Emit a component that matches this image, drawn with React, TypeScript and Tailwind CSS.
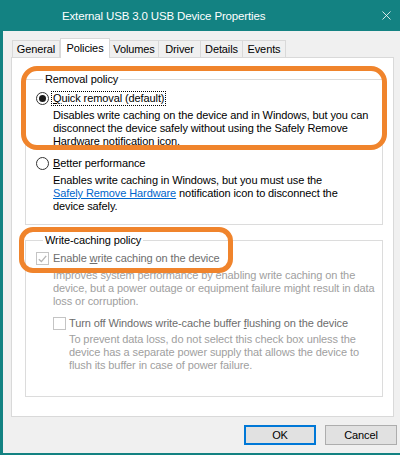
import { X } from 'lucide-react';

const tabs = [
  { label: 'General', w: 'w-[48px]' },
  { label: 'Policies', w: 'w-[50px]', active: true },
  { label: 'Volumes', w: 'w-[50px]' },
  { label: 'Driver', w: 'w-[43px]' },
  { label: 'Details', w: 'w-[43px]' },
  { label: 'Events', w: 'w-[44px]' },
];

function Radio({ checked }: { checked?: boolean }) {
  return (
    <span className="flex h-[13px] w-[13px] shrink-0 items-center justify-center rounded-full border border-[#333] bg-white">
      {checked && <span className="h-[7px] w-[7px] rounded-full bg-[#1a1a1a]" />}
    </span>
  );
}

function Check({ checked }: { checked?: boolean }) {
  return (
    <span className="flex h-[13px] w-[13px] shrink-0 items-center justify-center border border-[#c4c4c4] bg-white">
      {checked && (
        <svg width="9" height="8" viewBox="0 0 9 8">
          <path d="M0.8 4.2 L3.4 6.6 L8.2 0.9" fill="none" stroke="#b5b5b5" strokeWidth="1.4" />
        </svg>
      )}
    </span>
  );
}

export default function App() {
  return (
    <div className="relative h-[455px] w-[400px] overflow-hidden border-b-2 border-l-[3px] border-[#138282] bg-[#f0f0f0] font-['Liberation_Sans',Arial,sans-serif] text-[11px] leading-[13px] tracking-[-0.1px] text-black">
      {/* title bar */}
      <div className="flex h-[31px] items-center justify-between bg-[#138282] pl-[59px] pr-[6px] text-white">
        <span className="text-[11.5px] leading-[16px] tracking-[-0.15px]">External USB 3.0 USB Device Properties</span>
        <X className="h-[15px] w-[15px]" strokeWidth={1.3} />
      </div>

      {/* tabs */}
      <div className="mt-[7px] flex items-end pl-[9px]">
        {tabs.map((t) =>
          t.active ? (
            <div
              key={t.label}
              className={`${t.w} relative z-10 -mb-px flex h-[20px] items-center justify-center border border-b-0 border-[#d9d9d9] bg-white`}
            >
              {t.label}
            </div>
          ) : (
            <div
              key={t.label}
              className={`${t.w} -ml-px flex h-[17px] items-center justify-center border border-b-0 border-[#d9d9d9] bg-[#f0f0f0] first:ml-0`}
            >
              {t.label}
            </div>
          ),
        )}
      </div>

      {/* panel */}
      <div className="ml-[8px] h-[360px] w-[383px] border border-[#d9d9d9] bg-white pl-[13px] pt-[14px]">
        <fieldset className="h-[153px] w-[358px] border border-[#dcdcdc] pl-[10px]">
          <legend className="ml-[7px] px-[2px] leading-[15px]">Removal policy</legend>
          <div className="mt-[4px] flex items-center gap-[2px]">
            <Radio checked />
            <span className="border border-dotted border-black px-px leading-[13px]">
              <span className="underline">Q</span>uick removal (default)
            </span>
          </div>
          <div className="ml-[17px] mt-[3px] whitespace-nowrap">
            <div>Disables write caching on the device and in Windows, but you can</div>
            <div>disconnect the device safely without using the Safely Remove</div>
            <div>Hardware notification icon.</div>
          </div>
          <div className="mt-[9px] flex items-center gap-[4px]">
            <Radio />
            <span>
              <span className="underline">B</span>etter performance
            </span>
          </div>
          <div className="ml-[17px] mt-[4px] whitespace-nowrap">
            <div>Enables write caching in Windows, but you must use the</div>
            <div>
              <span className="text-[#0066cc] underline">Safely Remove Hardware</span> notification icon to disconnect the
            </div>
            <div>device safely.</div>
          </div>
        </fieldset>

        <fieldset className="mt-[8px] h-[164px] w-[358px] border border-[#dcdcdc] pl-[10px] text-[#6d6d6d]">
          <legend className="ml-[7px] px-[2px] leading-[15px] text-black">Write-caching policy</legend>
          <div className="mt-[4px] flex items-center gap-[4px]">
            <Check checked />
            <span>
              Enable <span className="underline">w</span>rite caching on the device
            </span>
          </div>
          <div className="ml-[17px] mt-[4px] whitespace-nowrap text-[#a0a0a0]">
            <div>Improves system performance by enabling write caching on the</div>
            <div>device, but a power outage or equipment failure might result in data</div>
            <div>loss or corruption.</div>
          </div>
          <div className="ml-[17px] mt-[9px] flex items-center gap-[3px]">
            <Check />
            <span>
              Turn off Windows write-cache buffer <span className="underline">f</span>lushing on the device
            </span>
          </div>
          <div className="ml-[33px] mt-[3px] whitespace-nowrap text-[#a0a0a0]">
            <div>To prevent data loss, do not select this check box unless the</div>
            <div>device has a separate power supply that allows the device to</div>
            <div>flush its buffer in case of power failure.</div>
          </div>
        </fieldset>
      </div>

      {/* buttons */}
      <div className="mr-[3px] mt-[8px] flex justify-end gap-[9px]">
        <button className="h-[20px] w-[72px] border-2 border-[#0078d7] bg-[#e1e1e1] leading-[14px]">OK</button>
        <button className="h-[20px] w-[72px] border border-[#adadad] bg-[#e1e1e1] leading-[14px]">Cancel</button>
      </div>

      {/* orange annotation marks */}
      <div className="pointer-events-none absolute left-[18px] top-[66px] h-[84px] w-[366px] rounded-[16px] border-[5px] border-[#f0842c]" />
      <div className="pointer-events-none absolute left-[16px] top-[227px] h-[46px] w-[214px] rounded-[14px] border-[5px] border-[#f0842c]" />
    </div>
  );
}
